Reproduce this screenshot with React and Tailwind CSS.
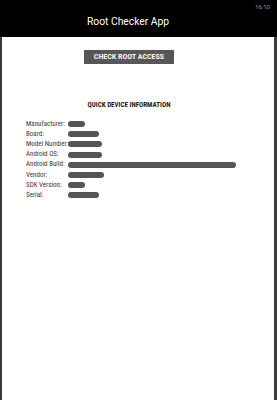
const rows = [
  { label: 'Manufacturer:', w: 17 },
  { label: 'Board:', w: 31 },
  { label: 'Model Number:', w: 34 },
  { label: 'Android OS:', w: 34 },
  { label: 'Android Build:', w: 168 },
  { label: 'Vendor:', w: 36 },
  { label: 'SDK Version:', w: 17 },
  { label: 'Serial:', w: 31 },
]

const narrow = { fontFamily: '"Liberation Sans Narrow", "Roboto Condensed", "DejaVu Sans Condensed", Roboto, sans-serif' }

export default function App() {
  return (
    <div className="w-[277px] h-[400px] flex flex-col bg-white overflow-hidden" style={{ fontFamily: 'Roboto, "Liberation Sans", sans-serif' }}>
      {/* app bar */}
      <div className="relative h-[37px] bg-black shrink-0 flex items-center justify-center pr-[21px]">
        <span className="absolute right-[7px] top-[2px] text-[6px] text-[#9a9a9a]">16:10</span>
        <span className="text-white text-[10.3px] mt-[7px]">Root Checker App</span>
      </div>

      <div className="flex-1 flex flex-col border-l-[2px] border-r-[3px] border-[#3c3c3c] pr-[18px]">
        <div className="flex justify-center pt-[13px]">
          <button className="w-[90px] h-[14px] bg-[#575757] text-[#f2f2f2] text-[8px] font-bold uppercase leading-none flex items-center justify-center" style={narrow}>
            Check Root Access
          </button>
        </div>

        <h2 className="mt-[38px] text-center text-[7px] font-bold text-[#1a1a1a] leading-none" style={narrow}>
          QUICK DEVICE INFORMATION
        </h2>

        <div className="mt-[10px] pl-[24px] flex flex-col">
          {rows.map(r => (
            <div key={r.label} className="h-[10.2px] flex items-center">
              <span className="w-[42px] text-[7px] text-[#3a3a3a] leading-none whitespace-nowrap" style={narrow}>{r.label}</span>
              <span className="h-[6px] rounded-full bg-[#555]" style={{ width: r.w }} />
            </div>
          ))}
        </div>
      </div>
    </div>
  )
}
